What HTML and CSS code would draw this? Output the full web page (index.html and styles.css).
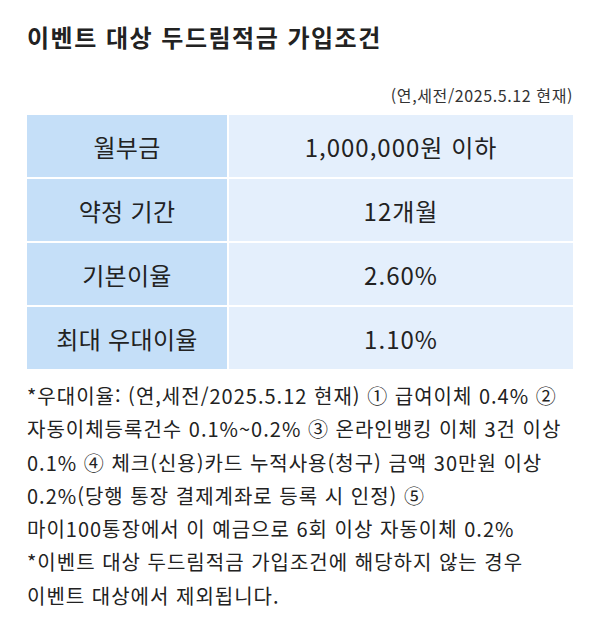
FILE: index.html
```html
<!DOCTYPE html>
<html lang="ko">
<head>
<meta charset="utf-8">
<link rel="stylesheet" href="styles.css">
</head>
<body>
<div class="page">
  <h1 class="title">이벤트 대상 두드림적금 가입조건</h1>
  <p class="asof">(연,세전/2025.5.12 현재)</p>
  <div class="table">
    <div class="th">월부금</div><div class="td">1,000,000원 이하</div>
    <div class="th">약정 기간</div><div class="td">12개월</div>
    <div class="th">기본이율</div><div class="td">2.60%</div>
    <div class="th">최대 우대이율</div><div class="td">1.10%</div>
  </div>
  <p class="note">*우대이율: (연,세전/2025.5.12 현재) ① 급여이체 0.4% ② 자동이체등록건수 0.1%~0.2% ③ 온라인뱅킹 이체 3건 이상 0.1% ④ 체크(신용)카드 누적사용(청구) 금액 30만원 이상 0.2%(당행 통장 결제계좌로 등록 시 인정) ⑤ 마이100통장에서 이 예금으로 6회 이상 자동이체 0.2%<br>*이벤트 대상 두드림적금 가입조건에 해당하지 않는 경우 이벤트 대상에서 제외됩니다.</p>
</div>
</body>
</html>
```
FILE: styles.css
```css
html, body { margin: 0; padding: 0; background: #fff; }
body { font-family: "Noto Sans CJK KR", "Noto Sans", sans-serif; color: #222; }
.page { padding: 20px 27px 0 27px; }
.title { margin: 0; font-size: 24px; font-weight: 700; line-height: 34px; color: #222; letter-spacing: 1.5px; }
.asof { margin: 30px 0 0 0; text-align: right; font-size: 16px; line-height: 22px; color: #333; letter-spacing: 0.6px; }
.table { margin-top: 9px; display: grid; grid-template-columns: 200px 1fr; gap: 2px; background: #fff; }
.th, .td { height: 62px; display: flex; align-items: center; justify-content: center; font-size: 24px; color: #222; }
.th { background: #c5dff8; letter-spacing: 0.3px; }
.td { background: #e4effc; letter-spacing: 1px; }
.note { margin: 10px 0 0 0; font-size: 20px; line-height: 33.3px; color: #222; letter-spacing: 1px; word-break: keep-all; }
```
